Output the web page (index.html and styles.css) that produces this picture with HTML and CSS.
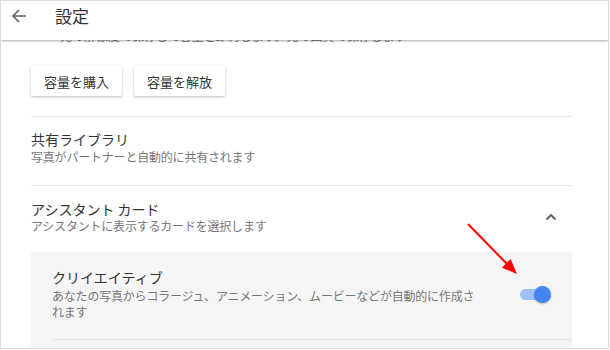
FILE: index.html
```html
<!DOCTYPE html>
<html lang="ja">
<head>
    <meta charset="UTF-8">
    <title>設定</title>
    <link rel="stylesheet" href="styles.css">
</head>
<body>
    <div class="window">
        <div class="topbar">
            <svg class="back" width="16" height="16" viewBox="0 0 16 16">
                <path d="M15 8H2M8 2L2 8l6 6" fill="none" stroke="#5f5f5f" stroke-width="1.6"/>
            </svg>
            <span class="title">設定</span>
        </div>

        <div class="content">
            <p class="ghost">元の解像度で保存して容量を節約します。元の画質で保存します</p>

            <div class="section buttons">
                <button class="btn">容量を購入</button>
                <button class="btn">容量を解放</button>
            </div>

            <div class="section row">
                <div class="label">
                    <div class="name">共有ライブラリ</div>
                    <div class="desc">写真がパートナーと自動的に共有されます</div>
                </div>
            </div>

            <div class="row assist">
                <div class="label">
                    <div class="name">アシスタント カード</div>
                    <div class="desc">アシスタントに表示するカードを選択します</div>
                </div>
                <svg class="chevron" width="12" height="8" viewBox="0 0 12 8">
                    <path d="M1.5 6.5L6 2l4.5 4.5" fill="none" stroke="#5a5a5a" stroke-width="1.8"/>
                </svg>
            </div>

            <div class="subpanel">
                <div class="row subrow">
                    <div class="label">
                        <div class="name">クリイエイティブ</div>
                        <div class="desc">あなたの写真からコラージュ、アニメーション、ムービーなどが自動的に作成されます</div>
                    </div>
                    <div class="switch">
                        <span class="track"></span>
                        <span class="knob"></span>
                    </div>
                </div>
            </div>
        </div>

        <!-- 注釈の赤い矢印 -->
        <svg class="pointer" width="610" height="350" viewBox="0 0 610 350">
            <line x1="468" y1="224" x2="508" y2="265" stroke="#f00" stroke-width="2"/>
            <polygon points="517,274 510.6,259 502,267.8" fill="#f00"/>
        </svg>
    </div>
</body>
</html>
```

FILE: styles.css
```css
body {
    margin: 0;
    font-family: "Noto Sans CJK JP", "Noto Sans", sans-serif;
    background-color: #fff;
    overflow: hidden;
}

.window {
    position: relative;
    width: 609px;
    height: 349px;
    box-sizing: border-box;
    border: 1px solid #dcdcdc;
    overflow: hidden;
    background-color: #fff;
}

/* ヘッダー */
.topbar {
    position: absolute;
    top: 0;
    left: 0;
    right: 0;
    height: 39px;
    background-color: #fff;
    box-shadow: 0 1px 2px rgba(0, 0, 0, 0.35);
    display: flex;
    align-items: center;
    z-index: 2;
}

.back {
    margin: -9px 0 0 10px;
}

.title {
    margin: -11px 0 0 28px;
    font-size: 17px;
    color: #333;
}

.content {
    padding: 0 36px 0 30px;
}

.ghost {
    margin: 0;
    padding: 27px 0 0 29px;
    font-size: 12px;
    line-height: 16px;
    color: #777;
    white-space: nowrap;
}

.section {
    border-bottom: 1px solid #e6e6e6;
}

.buttons {
    display: flex;
    gap: 12px;
    padding: 22px 0 20px;
}

.btn {
    height: 30px;
    padding: 0 13px;
    border: none;
    border-radius: 2px;
    background-color: #fff;
    box-shadow: 0 1px 3px rgba(0, 0, 0, 0.28);
    font-family: inherit;
    font-size: 13px;
    color: #333;
}

.row {
    display: flex;
    align-items: center;
    padding: 13px 0 20px;
}

.label {
    flex: 1;
}

.name {
    font-size: 14px;
    line-height: 18px;
    color: #333;
}

.desc {
    font-size: 12px;
    line-height: 17px;
    color: #777;
    letter-spacing: -0.2px;
}

.assist {
    padding: 14px 0 18px;
}

.assist .desc {
    line-height: 16px;
}

.chevron {
    margin: 0 15px 0 0;
}

/* 展開されたカード一覧 */
.subpanel {
    background-color: #f5f5f5;
    padding-left: 21px;
    height: 120px;
}

.subrow {
    gap: 40px;
    padding: 16px 21px 19px 0;
    border-bottom: 1px solid #e4e4e4;
}

.subrow .desc {
    line-height: 16px;
    margin-top: 2px;
}

.switch {
    position: relative;
    width: 31px;
    height: 17px;
}

.track {
    position: absolute;
    left: 0;
    top: 3px;
    width: 28px;
    height: 11px;
    border-radius: 6px;
    background-color: #9fc0f7;
}

.knob {
    position: absolute;
    right: 0;
    top: 0;
    width: 17px;
    height: 17px;
    border-radius: 50%;
    background-color: #4285f4;
    box-shadow: 0 1px 2px rgba(0, 0, 0, 0.3);
}

.pointer {
    position: absolute;
    top: -1px;
    left: -1px;
    z-index: 3;
}
```
